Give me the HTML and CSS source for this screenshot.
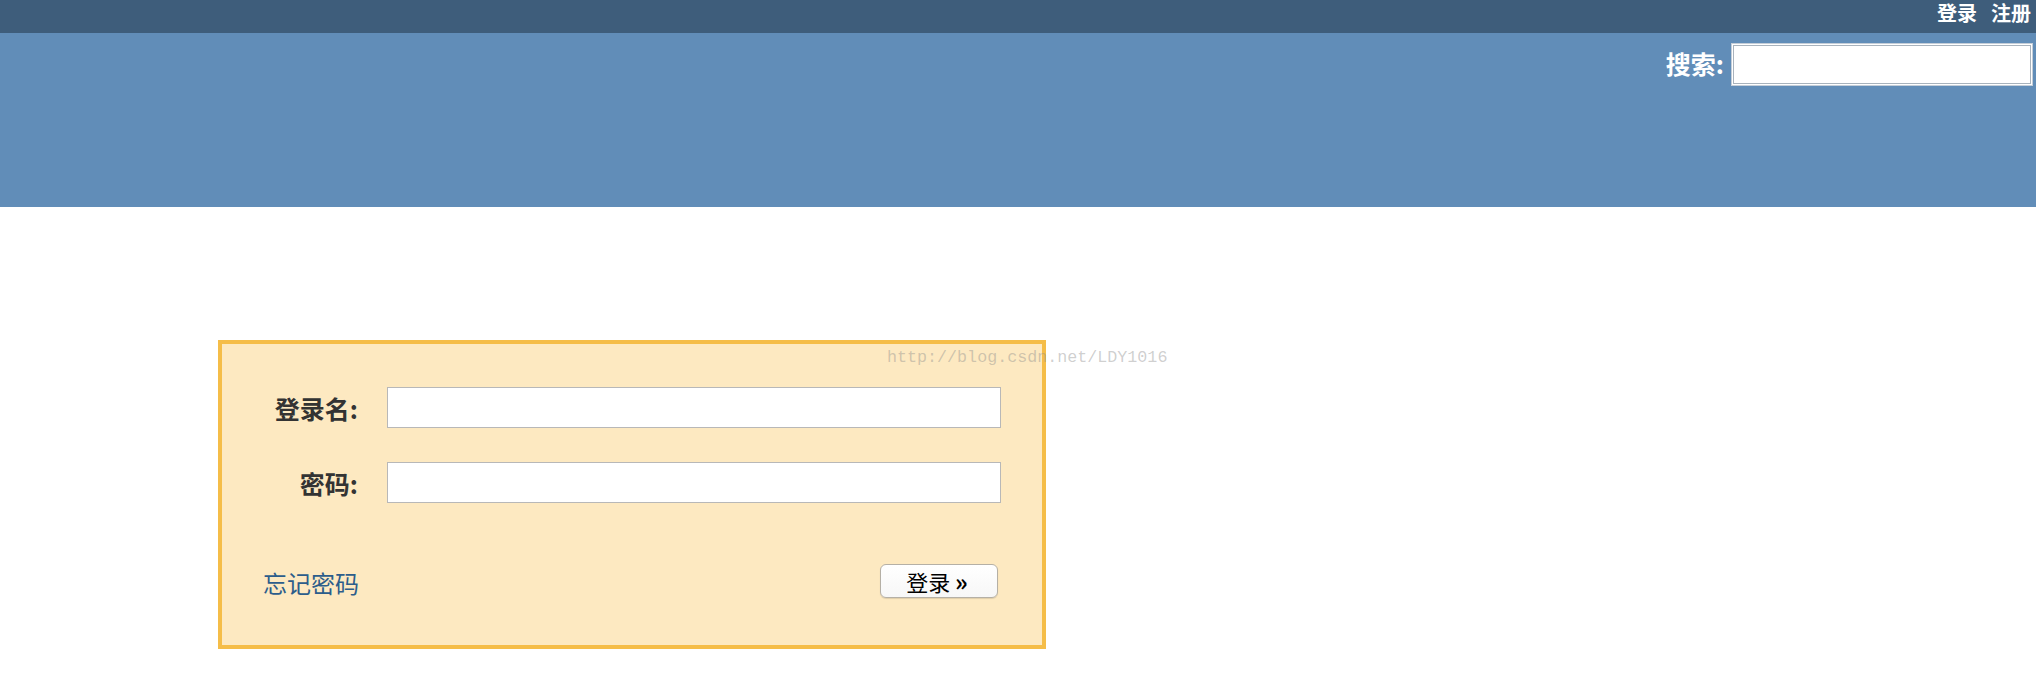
FILE: index.html
```html
<!DOCTYPE html>
<html lang="zh-CN">
<head>
<meta charset="utf-8">
<title>登录</title>
<link rel="stylesheet" href="styles.css">
</head>
<body>
<div class="topbar">
  <a class="toplink" href="#">登录</a>
  <a class="toplink" href="#">注册</a>
</div>
<div class="header">
  <div class="search">
    <label class="search-label">搜索:</label>
    <input class="search-input" type="text">
  </div>
</div>
<div class="main">
  <div class="watermark">http://blog.csdn.net/LDY1016</div>
  <form class="login-box">
    <div class="fields">
      <label class="field-label">登录名:</label>
      <input class="field-input" type="text">
      <label class="field-label">密码:</label>
      <input class="field-input" type="password">
    </div>
    <div class="actions">
      <a class="forgot" href="#">忘记密码</a>
      <button class="submit" type="button">登录 <span class="raquo">»</span></button>
    </div>
  </form>
</div>
</body>
</html>
```
FILE: styles.css
```css
html, body {
  margin: 0;
  padding: 0;
  background: #ffffff;
  font-family: "Noto Sans CJK SC", "Liberation Sans", sans-serif;
}

.topbar {
  height: 33px;
  background: #3e5d7b;
  display: flex;
  justify-content: flex-end;
  align-items: flex-start;
  gap: 14px;
  padding-right: 5px;
  box-sizing: border-box;
}

.toplink {
  color: #ffffff;
  font-size: 20px;
  font-weight: bold;
  line-height: 26px;
  text-decoration: none;
}

.header {
  height: 174px;
  background: #618db8;
  box-sizing: border-box;
  padding: 10px 3px 0 0;
}

.search {
  display: flex;
  justify-content: flex-end;
  align-items: center;
  gap: 7px;
}

.search-label {
  color: #ffffff;
  font-size: 25px;
  font-weight: bold;
  line-height: 30px;
  margin-top: -3px;
}

.search-input {
  width: 302px;
  height: 43px;
  box-sizing: border-box;
  margin: 0;
  border: 1px solid #c5ced8;
  box-shadow: inset 0 0 0 1px #ffffff, inset 0 0 0 2px #a9b3bd;
  background: #ffffff;
  outline: none;
}

.main {
  position: relative;
  padding: 133px 0 0 218px;
}

.watermark {
  position: absolute;
  left: 887px;
  top: 141px;
  font-family: "Liberation Mono", "DejaVu Sans Mono", monospace;
  font-size: 16.7px;
  line-height: 20px;
  color: rgba(140, 140, 140, 0.42);
  white-space: nowrap;
  pointer-events: none;
}

.login-box {
  width: 828px;
  box-sizing: border-box;
  margin: 0;
  border: 4px solid #f5bd48;
  background: #fde9c1;
  padding: 43px 41px 47px 41px;
}

.fields {
  display: grid;
  grid-template-columns: 95px 614px;
  column-gap: 29px;
  row-gap: 34px;
  align-items: center;
}

.field-label {
  text-align: right;
  font-size: 25px;
  font-weight: bold;
  color: #333333;
  line-height: 30px;
  white-space: nowrap;
}

.field-input {
  height: 41px;
  width: 614px;
  box-sizing: border-box;
  margin: 0;
  border: 1px solid #b8b8b8;
  background: #ffffff;
  outline: none;
}

.actions {
  margin-top: 61px;
  display: flex;
  justify-content: space-between;
  align-items: center;
  padding-right: 3px;
}

.forgot {
  color: #2c5d8b;
  font-size: 24px;
  line-height: 30px;
  text-decoration: none;
  margin-top: 4px;
}

.submit {
  width: 118px;
  height: 34px;
  box-sizing: border-box;
  margin: 0;
  padding: 0 4px 0 0;
  border: 1px solid #b5b0a6;
  border-radius: 6px;
  background: linear-gradient(#ffffff, #f7f7f7);
  box-shadow: 0 1px 1px rgba(0, 0, 0, 0.12);
  font-family: "Noto Sans CJK SC", "Liberation Sans", sans-serif;
  font-size: 22px;
  line-height: 30px;
  color: #000000;
}

.raquo {
  font-weight: bold;
  font-size: 24px;
}
```
